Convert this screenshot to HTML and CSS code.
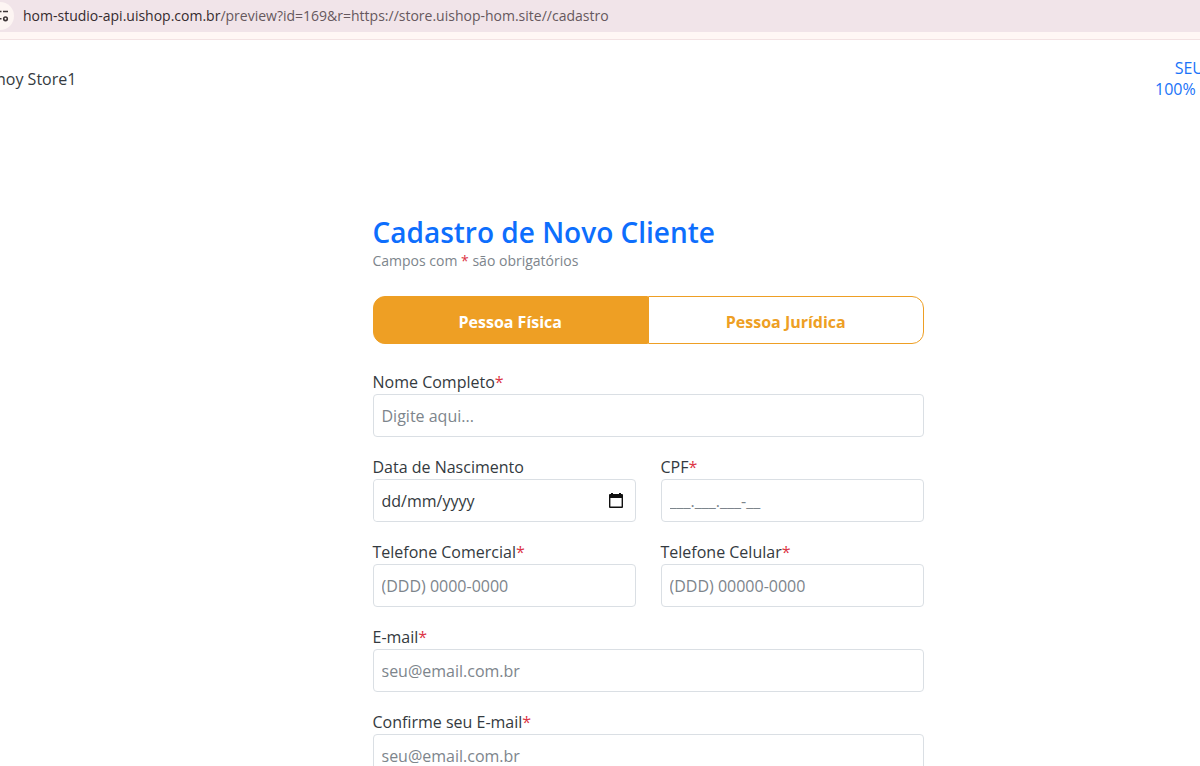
FILE: index.html
```html
<!DOCTYPE html>
<html lang="pt-BR">
<head>
  <meta charset="UTF-8" />
  <meta name="viewport" content="width=device-width, initial-scale=1.0" />
  <title>Cadastro de Novo Cliente</title>
  <link rel="stylesheet" href="styles.css">
</head>
<body>
  <div class="address-bar">
    <button class="site-info" type="button" aria-label="Informações do site">
      <svg width="14" height="28" viewBox="0 0 14 28" fill="none" stroke="#3d3537" stroke-width="1.6">
        <path d="M0 9.5h1.5M3 9.5h5M0 16.8h1.5" />
        <circle cx="5.5" cy="16.8" r="1.8" />
      </svg>
    </button>
    <div class="url"><span class="url-host">hom-studio-api.uishop.com.br</span>/preview?id=169&amp;r=https://store.uishop-hom.site//cadastro</div>
  </div>

  <header class="store-header">
    <a class="store-name" href="#">noy Store1</a>
    <a class="store-promo" href="#">SEU<br>100%&nbsp;&nbsp;</a>
  </header>

  <main class="page">
    <form class="signup">
      <h1>Cadastro de Novo Cliente</h1>
      <p class="hint">Campos com <span class="required">*</span> são obrigatórios</p>

      <div class="person-type">
        <button type="button" class="active">Pessoa Física</button>
        <button type="button">Pessoa Jurídica</button>
      </div>

      <div class="fields">
        <div class="field wide">
          <label for="nome">Nome Completo<span class="required">*</span></label>
          <input type="text" id="nome" placeholder="Digite aqui..." />
        </div>

        <div class="field">
          <label for="nascimento">Data de Nascimento</label>
          <div class="date-box">
            <input type="text" id="nascimento" placeholder="dd/mm/yyyy" />
            <button type="button" aria-label="Abrir calendário">
              <svg width="14" height="16" viewBox="0 0 14 16">
                <path fill="#111" fill-rule="evenodd" d="M2 0h2v1h6V0h2v1h1q1 0 1 1v12q0 1-1 1H1q-1 0-1-1V2q0-1 1-1h1zM1.400 5v8.600h11.200V5z" />
              </svg>
            </button>
          </div>
        </div>
        <div class="field">
          <label for="cpf">CPF<span class="required">*</span></label>
          <input type="text" id="cpf" placeholder="___.___.___-__" />
        </div>

        <div class="field">
          <label for="comercial">Telefone Comercial<span class="required">*</span></label>
          <input type="tel" id="comercial" placeholder="(DDD) 0000-0000" />
        </div>
        <div class="field">
          <label for="celular">Telefone Celular<span class="required">*</span></label>
          <input type="tel" id="celular" placeholder="(DDD) 00000-0000" />
        </div>

        <div class="field wide">
          <label for="email">E-mail<span class="required">*</span></label>
          <input type="email" id="email" placeholder="seu@email.com.br" />
        </div>
        <div class="field wide">
          <label for="confirma">Confirme seu E-mail<span class="required">*</span></label>
          <input type="email" id="confirma" placeholder="seu@email.com.br" />
        </div>
      </div>
    </form>
  </main>
</body>
</html>
```
FILE: styles.css
```css
* {
  box-sizing: border-box;
}
html {
  height: 100%;
  overflow: hidden;
}
body {
  margin: 0;
  height: 100%;
  overflow: hidden;
  font-family: "Segoe UI", "Open Sans", "Noto Sans", sans-serif;
  font-size: 16px;
  line-height: 24px;
  color: #343a40;
  background: #fff;
}
button,
input {
  font: inherit;
  color: inherit;
}

.address-bar {
  display: flex;
  align-items: center;
  gap: 9px;
  height: 40px;
  padding-bottom: 8px;
  background: linear-gradient(#f1e4e9 32px, #fff7f5 32px);
  border-bottom: 1px solid #f3e2e3;
}
.site-info {
  display: flex;
  padding: 0;
  border: none;
  border-radius: 0 14px 14px 0;
  background: #fdf5f3;
}
.url {
  font-size: 14px;
  color: #66585d;
}
.url-host {
  color: #352b2e;
}

/* the header runs past both window edges */
.store-header {
  display: flex;
  justify-content: space-between;
  align-items: center;
  margin: 0 -4px;
  padding-top: 18px;
}
.store-header a {
  text-decoration: none;
}
.store-name {
  color: #343a40;
}
.store-promo {
  line-height: 21px;
  text-align: right;
  color: #1a73f8;
}

.page {
  padding: 116px 0 0 96px;
}
.signup {
  max-width: 551px;
  margin: 0 auto;
}
h1 {
  margin: 0;
  font-size: 28px;
  font-weight: 600;
  line-height: 33px;
  color: #0d6efd;
}
.hint {
  margin: 0;
  font-size: 14px;
  color: #7d858c;
}
.required {
  color: #dc3545;
}

.person-type {
  display: flex;
  margin: 23px 0 26px;
}
.person-type button {
  flex: 1;
  height: 48px;
  padding: 3px 0 0;
  border: 1px solid #ee9f24;
  border-radius: 0 12px 12px 0;
  background: #fff;
  color: #ee9f24;
  font-weight: 700;
}
.person-type .active {
  border-radius: 12px 0 0 12px;
  background: #ee9f24;
  color: #fff;
}

.fields {
  display: grid;
  grid-template-columns: 1fr 1fr;
  gap: 18px 25px;
}
.wide {
  grid-column: 1 / -1;
}
.field label {
  display: block;
}
.field input {
  display: block;
  width: 100%;
  height: 43px;
  padding: 0 8px;
  border: 1px solid #dadfe4;
  border-radius: 4px;
  background: #fff;
}
.field input::placeholder {
  color: #7d858c;
  opacity: 1;
}
.date-box {
  display: flex;
  align-items: center;
  height: 43px;
  padding-right: 12px;
  border: 1px solid #dadfe4;
  border-radius: 4px;
}
.field .date-box input {
  flex: 1;
  height: 41px;
  border: none;
}
.field .date-box input::placeholder {
  color: #343a40;
}
.date-box button {
  display: flex;
  padding: 0;
  border: none;
  background: none;
}
```
